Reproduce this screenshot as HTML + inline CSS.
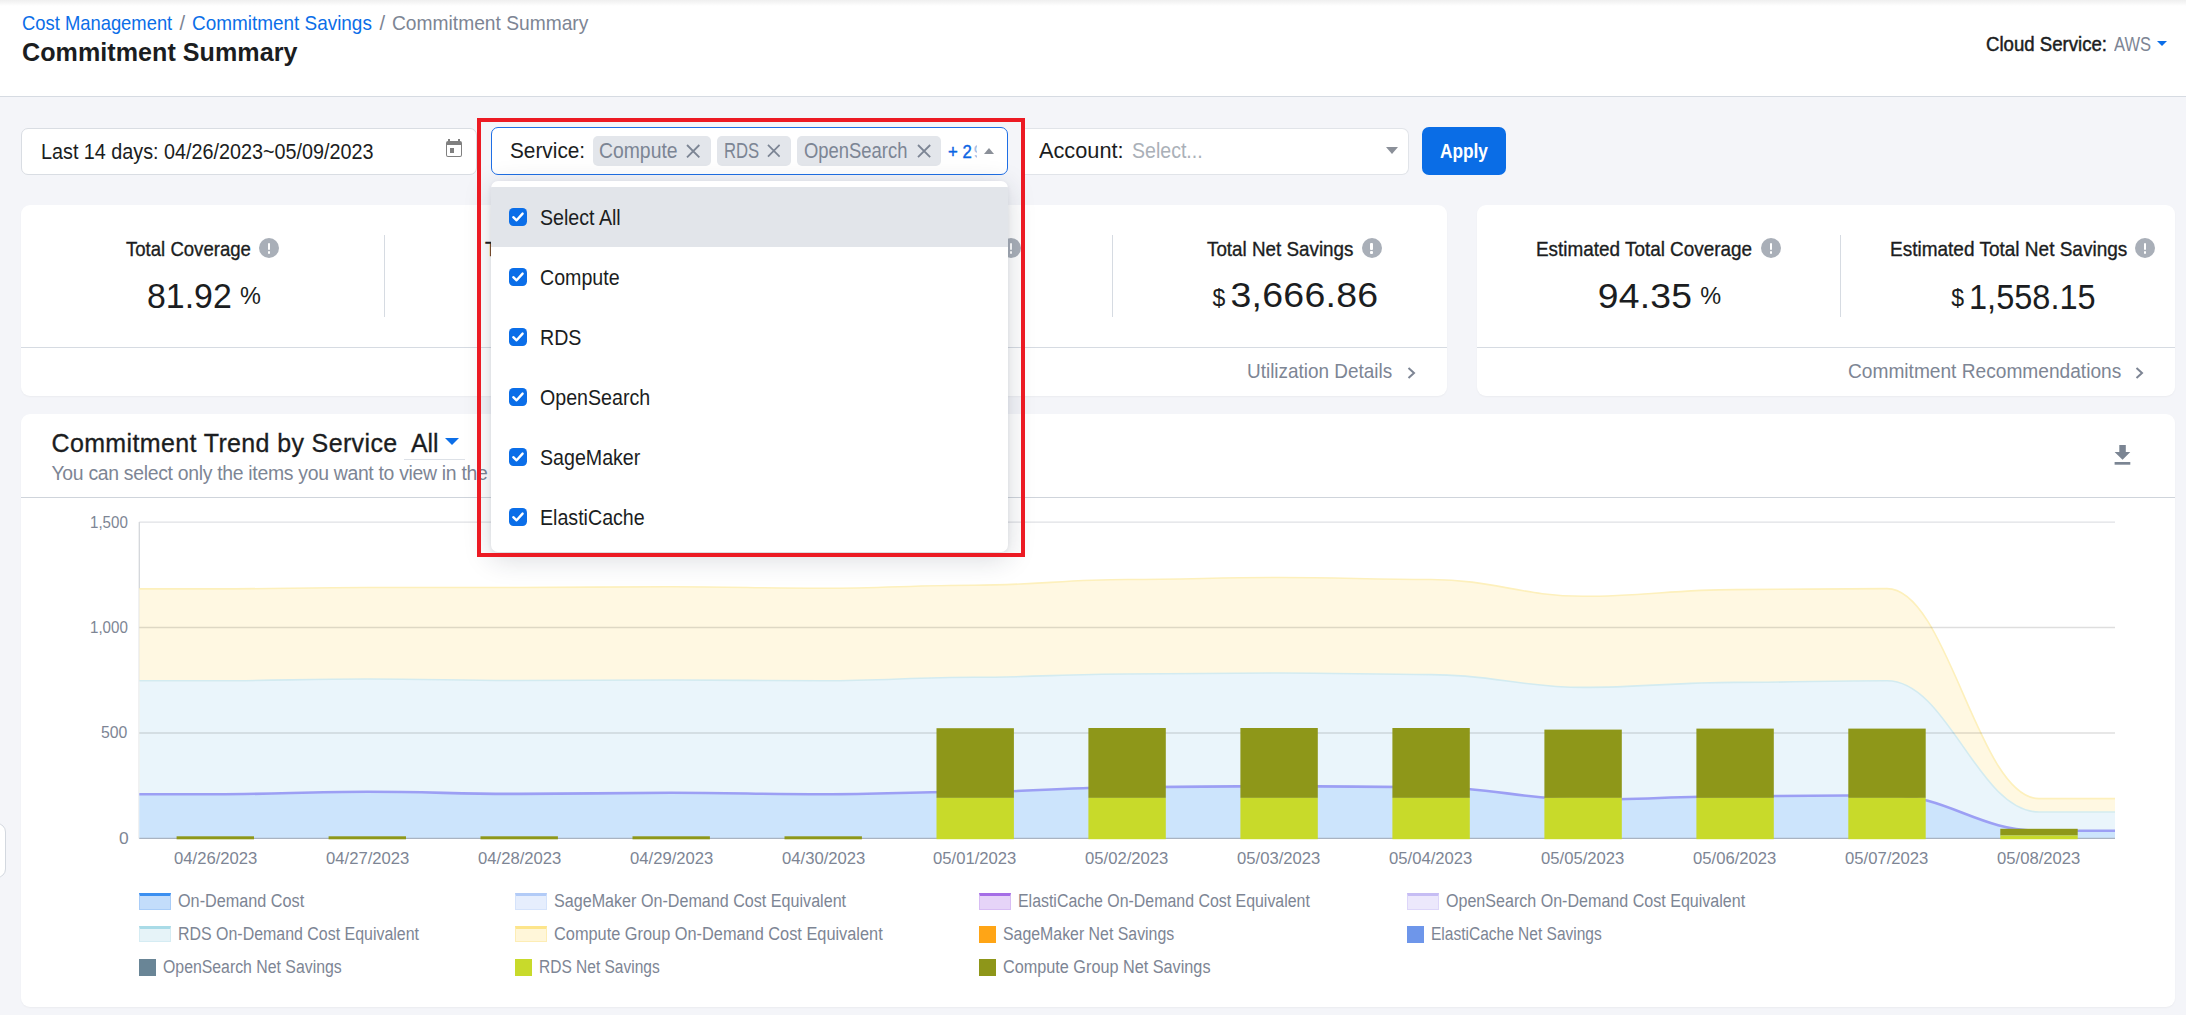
<!DOCTYPE html>
<html><head><meta charset="utf-8"><style>
html,body{margin:0;padding:0;}
body{width:2186px;height:1015px;overflow:hidden;position:relative;background:#f4f5f9;font-family:"Liberation Sans",sans-serif;}
.t{position:absolute;white-space:nowrap;line-height:1;}
</style></head><body>
<div style="position:absolute;left:0;top:0;width:2186px;height:96px;background:#fff;border-bottom:1.5px solid #d6dbe2;"></div>
<div style="position:absolute;left:0;top:0;width:2186px;height:6px;background:linear-gradient(#efefef,#fff);"></div>
<div class="t" style="left:22.00px;top:13.13px;font-size:20.20px;color:#0b6ee8;transform:scale(0.9107,1.0000);transform-origin:0 16.97px;">Cost Management</div>
<div class="t" style="left:179.50px;top:13.13px;font-size:20.20px;color:#7d8594;">/</div>
<div class="t" style="left:192.00px;top:13.13px;font-size:20.20px;color:#0b6ee8;transform:scale(0.9375,1.0000);transform-origin:0 16.97px;">Commitment Savings</div>
<div class="t" style="left:379.50px;top:13.13px;font-size:20.20px;color:#7d8594;">/</div>
<div class="t" style="left:392.00px;top:13.13px;font-size:20.20px;color:#7d8594;transform:scale(0.9514,1.0000);transform-origin:0 16.97px;">Commitment Summary</div>
<div class="t" style="left:22.00px;top:39.92px;font-size:25.10px;letter-spacing:0.046px;font-weight:700;color:#1b1d21;">Commitment Summary</div>
<div class="t" style="left:1985.80px;top:34.74px;font-size:19.60px;color:#1b1d21;transform:scale(0.9498,1.0000);transform-origin:0 16.46px;-webkit-text-stroke:0.45px #1b1d21;">Cloud Service:</div>
<div class="t" style="left:2113.80px;top:34.74px;font-size:19.60px;color:#7d8594;transform:scale(0.8427,1.0000);transform-origin:0 16.46px;">AWS</div>
<div style="position:absolute;left:2157.3px;top:41px;width:0;height:0;border-left:5.75px solid transparent;border-right:5.75px solid transparent;border-top:5.5px solid #0b6ee8;"></div>
<div style="position:absolute;left:21px;top:127.5px;width:454px;height:45px;background:#fff;border:1px solid #d9dde3;border-radius:7px;"></div>
<div class="t" style="left:41.00px;top:140.70px;font-size:21.90px;color:#1b1d21;transform:scale(0.9032,1.0000);transform-origin:0 18.40px;">Last 14 days: 04/26/2023~05/09/2023</div>
<div style="position:absolute;left:445.9px;top:141.1px;width:14.4px;height:11.4px;border:1.4px solid #808080;border-top:4.7px solid #808080;border-radius:2px;"></div>
<div style="position:absolute;left:449.9px;top:148px;width:4.3px;height:4.7px;background:#808080;"></div>
<div style="position:absolute;left:448.4px;top:139px;width:1.7px;height:3px;background:#808080;"></div>
<div style="position:absolute;left:458.3px;top:139px;width:1.7px;height:3px;background:#808080;"></div>
<div style="position:absolute;left:491px;top:127px;width:514.5px;height:45.5px;background:#fff;border:1.5px solid #1f6fe5;border-radius:7px;"></div>
<div class="t" style="left:510.40px;top:139.72px;font-size:22.60px;color:#1b1d21;transform:scale(0.9205,1.0000);transform-origin:0 18.98px;">Service:</div>
<div style="position:absolute;left:593px;top:136px;width:117.8px;height:29.6px;background:#e3e6eb;border-radius:5px;"></div>
<div class="t" style="left:599.20px;top:141.14px;font-size:21.50px;color:#7c8594;transform:scale(0.9004,1.0000);transform-origin:0 18.06px;">Compute</div>
<svg style="position:absolute;left:685.6px;top:143.8px" width="14.4" height="14.4" viewBox="0 0 14 14"><path d="M1 1L13 13M13 1L1 13" stroke="#7c8594" stroke-width="1.8" fill="none"/></svg>
<div style="position:absolute;left:717.2px;top:136px;width:73.6px;height:29.6px;background:#e3e6eb;border-radius:5px;"></div>
<div class="t" style="left:724.30px;top:141.14px;font-size:21.50px;color:#7c8594;transform:scale(0.7759,1.0000);transform-origin:0 18.06px;">RDS</div>
<svg style="position:absolute;left:766.6px;top:144.2px" width="13.6" height="13.6" viewBox="0 0 14 14"><path d="M1 1L13 13M13 1L1 13" stroke="#7c8594" stroke-width="1.8" fill="none"/></svg>
<div style="position:absolute;left:797.3px;top:136px;width:143.4px;height:29.6px;background:#e3e6eb;border-radius:5px;"></div>
<div class="t" style="left:804.40px;top:141.14px;font-size:21.50px;color:#7c8594;transform:scale(0.8565,1.0000);transform-origin:0 18.06px;">OpenSearch</div>
<svg style="position:absolute;left:916.5px;top:143.9px" width="14.2" height="14.2" viewBox="0 0 14 14"><path d="M1 1L13 13M13 1L1 13" stroke="#7c8594" stroke-width="1.8" fill="none"/></svg>
<div style="position:absolute;left:947px;top:134px;width:29.5px;height:34px;overflow:hidden;"><div class="t" style="margin-left:-947px;margin-top:-134px;left:948.20px;top:142.91px;font-size:18.80px;color:#0b66e4;transform:scale(0.8915,1.0000);transform-origin:0 15.79px;-webkit-text-stroke:0.45px #0b66e4;">+ 2</div><div class="t" style="margin-left:-947px;margin-top:-134px;left:973.50px;top:142.91px;font-size:18.80px;color:#a9c1e6;">9</div></div>
<div style="position:absolute;left:984.2px;top:147.9px;width:0;height:0;border-left:5.8px solid transparent;border-right:5.8px solid transparent;border-bottom:6.2px solid #8b9099;"></div>
<div style="position:absolute;left:1021px;top:127.5px;width:387px;height:45px;background:#fff;border:1px solid #e1e4e9;border-left:none;border-radius:0 7px 7px 0;"></div>
<div class="t" style="left:1039.40px;top:140.32px;font-size:22.60px;color:#1b1d21;transform:scale(0.9623,1.0000);transform-origin:0 18.98px;">Account:</div>
<div class="t" style="left:1131.60px;top:140.32px;font-size:22.60px;color:#aab0b8;transform:scale(0.8654,1.0000);transform-origin:0 18.98px;">Select...</div>
<div style="position:absolute;left:1386px;top:147.4px;width:0;height:0;border-left:6px solid transparent;border-right:6px solid transparent;border-top:7.4px solid #8b9099;"></div>
<div style="position:absolute;left:1422px;top:127px;width:84px;height:48px;background:#0a6de6;border-radius:7px;"></div>
<div class="t" style="left:1440.40px;top:140.68px;font-size:20.50px;font-weight:700;color:#fff;transform:scale(0.8423,1.0000);transform-origin:0 17.22px;">Apply</div>
<div style="position:absolute;left:21px;top:205px;width:1426px;height:190.5px;background:#fff;border-radius:9px;box-shadow:0 1px 2px rgba(0,0,0,0.04);"></div>
<div style="position:absolute;left:1477px;top:205px;width:698px;height:190.5px;background:#fff;border-radius:9px;box-shadow:0 1px 2px rgba(0,0,0,0.04);"></div>
<div style="position:absolute;left:21px;top:346.5px;width:1426px;height:1.5px;background:#d6dbe2;"></div>
<div style="position:absolute;left:1477px;top:346.5px;width:698px;height:1.5px;background:#d6dbe2;"></div>
<div style="position:absolute;left:383.55px;top:235.2px;width:1.5px;height:81.5px;background:#d6dbe2;"></div>
<div style="position:absolute;left:1111.75px;top:235.2px;width:1.5px;height:81.5px;background:#d6dbe2;"></div>
<div style="position:absolute;left:1839.85px;top:235.2px;width:1.5px;height:81.5px;background:#d6dbe2;"></div>
<div class="t" style="left:125.70px;top:238.90px;font-size:20.60px;color:#1b1d21;transform:scale(0.9016,1.0000);transform-origin:0 17.30px;-webkit-text-stroke:0.35px #1b1d21;">Total Coverage</div>
<div style="position:absolute;left:259.2px;top:238.0px;width:20px;height:20px;border-radius:50%;background:#a9afb8;"><div style="position:absolute;left:8.8px;top:4.6px;width:2.4px;height:7.4px;background:#fff;border-radius:1px"></div><div style="position:absolute;left:8.8px;top:13.4px;width:2.4px;height:2.4px;background:#fff;border-radius:1px"></div></div>
<div class="t" style="left:146.50px;top:278.92px;font-size:34.50px;color:#1b1d21;transform:scale(0.9824,1.0000);transform-origin:0 28.98px;">81.92</div>
<div class="t" style="left:240.00px;top:284.86px;font-size:23.50px;color:#1b1d21;">%</div>
<div class="t" style="left:485.10px;top:238.50px;font-size:20.60px;color:#1b1d21;-webkit-text-stroke:0.35px #1b1d21;">Total Utilization</div>
<div style="position:absolute;left:1001.0px;top:238.0px;width:20px;height:20px;border-radius:50%;background:#a9afb8;"><div style="position:absolute;left:8.8px;top:4.6px;width:2.4px;height:7.4px;background:#fff;border-radius:1px"></div><div style="position:absolute;left:8.8px;top:13.4px;width:2.4px;height:2.4px;background:#fff;border-radius:1px"></div></div>
<div class="t" style="left:1206.90px;top:238.95px;font-size:20.30px;color:#1b1d21;transform:scale(0.9276,1.0000);transform-origin:0 17.05px;-webkit-text-stroke:0.35px #1b1d21;">Total Net Savings</div>
<div style="position:absolute;left:1361.6px;top:238.0px;width:20px;height:20px;border-radius:50%;background:#a9afb8;"><div style="position:absolute;left:8.8px;top:4.6px;width:2.4px;height:7.4px;background:#fff;border-radius:1px"></div><div style="position:absolute;left:8.8px;top:13.4px;width:2.4px;height:2.4px;background:#fff;border-radius:1px"></div></div>
<div class="t" style="left:1212.40px;top:286.68px;font-size:23.00px;color:#1b1d21;">$</div>
<div class="t" style="left:1230.50px;top:276.30px;font-size:37.50px;letter-spacing:0.248px;color:#1b1d21;transform:scale(1.0000,0.9350);transform-origin:0 31.50px;">3,666.86</div>
<div class="t" style="left:1246.60px;top:361.77px;font-size:19.80px;color:#7d8594;transform:scale(0.9574,1.0000);transform-origin:0 16.63px;">Utilization Details</div>
<svg style="position:absolute;left:1407.0px;top:366.5px" width="9" height="12" viewBox="0 0 9 12"><path d="M1.5 1L7 6L1.5 11" stroke="#7d8594" stroke-width="2" fill="none"/></svg>
<div class="t" style="left:1536.40px;top:239.00px;font-size:20.60px;color:#1b1d21;transform:scale(0.9178,1.0000);transform-origin:0 17.30px;-webkit-text-stroke:0.35px #1b1d21;">Estimated Total Coverage</div>
<div style="position:absolute;left:1760.8px;top:238.0px;width:20px;height:20px;border-radius:50%;background:#a9afb8;"><div style="position:absolute;left:8.8px;top:4.6px;width:2.4px;height:7.4px;background:#fff;border-radius:1px"></div><div style="position:absolute;left:8.8px;top:13.4px;width:2.4px;height:2.4px;background:#fff;border-radius:1px"></div></div>
<div class="t" style="left:1597.80px;top:276.77px;font-size:37.30px;letter-spacing:0.216px;color:#1b1d21;transform:scale(1.0000,0.9350);transform-origin:0 31.33px;">94.35</div>
<div class="t" style="left:1700.30px;top:284.86px;font-size:23.50px;color:#1b1d21;">%</div>
<div class="t" style="left:1889.50px;top:239.00px;font-size:20.60px;color:#1b1d21;transform:scale(0.9227,1.0000);transform-origin:0 17.30px;-webkit-text-stroke:0.35px #1b1d21;">Estimated Total Net Savings</div>
<div style="position:absolute;left:2135.2px;top:238.0px;width:20px;height:20px;border-radius:50%;background:#a9afb8;"><div style="position:absolute;left:8.8px;top:4.6px;width:2.4px;height:7.4px;background:#fff;border-radius:1px"></div><div style="position:absolute;left:8.8px;top:13.4px;width:2.4px;height:2.4px;background:#fff;border-radius:1px"></div></div>
<div class="t" style="left:1951.20px;top:286.68px;font-size:23.00px;color:#1b1d21;">$</div>
<div class="t" style="left:1968.80px;top:278.70px;font-size:35.00px;color:#1b1d21;transform:scale(0.9294,1.0000);transform-origin:0 29.40px;">1,558.15</div>
<div class="t" style="left:1847.60px;top:361.94px;font-size:19.60px;color:#7d8594;transform:scale(0.9765,1.0000);transform-origin:0 16.46px;">Commitment Recommendations</div>
<svg style="position:absolute;left:2135.0px;top:366.5px" width="9" height="12" viewBox="0 0 9 12"><path d="M1.5 1L7 6L1.5 11" stroke="#7d8594" stroke-width="2" fill="none"/></svg>
<div style="position:absolute;left:21px;top:414px;width:2154px;height:593px;background:#fff;border-radius:9px;box-shadow:0 1px 2px rgba(0,0,0,0.04);"></div>
<div style="position:absolute;left:21px;top:497px;width:2154px;height:1px;background:#cfd4db;"></div>
<div class="t" style="left:51.50px;top:430.80px;font-size:25.00px;letter-spacing:0.363px;color:#1b1d21;-webkit-text-stroke:0.3px #1b1d21;">Commitment Trend by Service</div>
<div class="t" style="left:410.60px;top:430.80px;font-size:25.00px;color:#1b1d21;transform:scale(0.9910,1.0000);transform-origin:0 21.00px;-webkit-text-stroke:0.3px #1b1d21;">All</div>
<div style="position:absolute;left:445px;top:438.3px;width:0;height:0;border-left:7px solid transparent;border-right:7px solid transparent;border-top:7.9px solid #0b6ee8;"></div>
<div style="position:absolute;left:404px;top:459px;width:60.7px;height:1px;background:#dde1e7;"></div>
<div class="t" style="left:51.50px;top:464.30px;font-size:19.40px;color:#7d8594;letter-spacing:-0.302px;">You can select only the items you want to view in the chart.</div>
<svg style="position:absolute;left:2114px;top:444px" width="17" height="21" viewBox="0 0 17 21"><path d="M5.3 1H11.8V8.1H16.3L8.55 15.8L0.6 8.1H5.3Z" fill="#7b8593"/><rect x="0.6" y="18" width="15.7" height="2.7" fill="#7b8593"/></svg>
<div style="position:absolute;left:-30px;top:823px;width:34px;height:53px;background:#fff;border:1px solid #d3d8df;border-radius:9px;"></div>
<svg style="position:absolute;left:0;top:0" width="2186" height="1015">
<line x1="139.3" y1="522.2" x2="2115" y2="522.2" stroke="#dfe1e5" stroke-width="1.3"/>
<line x1="139.3" y1="522" x2="139.3" y2="838.4" stroke="#d3d6db" stroke-width="1.3"/>
<path d="M139.3,588.9 C169.7,588.9 184.9,588.9 215.3,588.9 C276.1,588.9 306.5,587.5 367.3,587.5 C428.1,587.5 458.5,587.5 519.2,587.5 C580.0,587.5 610.4,586.8 671.2,586.8 C732.0,586.8 762.4,588.2 823.2,588.2 C884.0,588.2 914.4,585.2 975.2,585.2 C1036.0,585.2 1066.4,579.5 1127.1,579.5 C1187.9,579.5 1218.3,577.5 1279.1,577.5 C1339.9,577.5 1370.3,579.5 1431.1,579.5 C1491.9,579.5 1522.3,596.3 1583.1,596.3 C1643.9,596.3 1674.3,589.6 1735.1,589.6 C1795.8,589.6 1826.2,588.6 1887.0,588.6 C1947.8,588.6 1978.2,798.6 2039.0,798.6 C2069.4,798.6 2084.6,798.6 2115.0,798.6 L2115,838.4 L139.3,838.4 Z" fill="#fff8e2"/>
<path d="M139.3,588.9 C169.7,588.9 184.9,588.9 215.3,588.9 C276.1,588.9 306.5,587.5 367.3,587.5 C428.1,587.5 458.5,587.5 519.2,587.5 C580.0,587.5 610.4,586.8 671.2,586.8 C732.0,586.8 762.4,588.2 823.2,588.2 C884.0,588.2 914.4,585.2 975.2,585.2 C1036.0,585.2 1066.4,579.5 1127.1,579.5 C1187.9,579.5 1218.3,577.5 1279.1,577.5 C1339.9,577.5 1370.3,579.5 1431.1,579.5 C1491.9,579.5 1522.3,596.3 1583.1,596.3 C1643.9,596.3 1674.3,589.6 1735.1,589.6 C1795.8,589.6 1826.2,588.6 1887.0,588.6 C1947.8,588.6 1978.2,798.6 2039.0,798.6 C2069.4,798.6 2084.6,798.6 2115.0,798.6" stroke="#fdf0bc" stroke-width="1.6" fill="none"/>
<path d="M139.3,680.8 C169.7,680.8 184.9,680.8 215.3,680.8 C276.1,680.8 306.5,679.0 367.3,679.0 C428.1,679.0 458.5,680.5 519.2,680.5 C580.0,680.5 610.4,680.0 671.2,680.0 C732.0,680.0 762.4,680.8 823.2,680.8 C884.0,680.8 914.4,677.3 975.2,677.3 C1036.0,677.3 1066.4,674.0 1127.1,674.0 C1187.9,674.0 1218.3,673.0 1279.1,673.0 C1339.9,673.0 1370.3,674.6 1431.1,674.6 C1491.9,674.6 1522.3,687.4 1583.1,687.4 C1643.9,687.4 1674.3,682.4 1735.1,682.4 C1795.8,682.4 1826.2,680.7 1887.0,680.7 C1947.8,680.7 1978.2,812.0 2039.0,812.0 C2069.4,812.0 2084.6,812.0 2115.0,812.0 L2115,838.4 L139.3,838.4 Z" fill="#eaf5fb"/>
<path d="M139.3,680.8 C169.7,680.8 184.9,680.8 215.3,680.8 C276.1,680.8 306.5,679.0 367.3,679.0 C428.1,679.0 458.5,680.5 519.2,680.5 C580.0,680.5 610.4,680.0 671.2,680.0 C732.0,680.0 762.4,680.8 823.2,680.8 C884.0,680.8 914.4,677.3 975.2,677.3 C1036.0,677.3 1066.4,674.0 1127.1,674.0 C1187.9,674.0 1218.3,673.0 1279.1,673.0 C1339.9,673.0 1370.3,674.6 1431.1,674.6 C1491.9,674.6 1522.3,687.4 1583.1,687.4 C1643.9,687.4 1674.3,682.4 1735.1,682.4 C1795.8,682.4 1826.2,680.7 1887.0,680.7 C1947.8,680.7 1978.2,812.0 2039.0,812.0 C2069.4,812.0 2084.6,812.0 2115.0,812.0" stroke="#d3ebf0" stroke-width="1.6" fill="none"/>
<path d="M139.3,794.2 C169.7,794.2 184.9,794.2 215.3,794.2 C276.1,794.2 306.5,791.8 367.3,791.8 C428.1,791.8 458.5,793.9 519.2,793.9 C580.0,793.9 610.4,792.8 671.2,792.8 C732.0,792.8 762.4,794.2 823.2,794.2 C884.0,794.2 914.4,791.8 975.2,791.8 C1036.0,791.8 1066.4,787.2 1127.1,787.2 C1187.9,787.2 1218.3,786.1 1279.1,786.1 C1339.9,786.1 1370.3,787.2 1431.1,787.2 C1491.9,787.2 1522.3,799.6 1583.1,799.6 C1643.9,799.6 1674.3,796.3 1735.1,796.3 C1795.8,796.3 1826.2,795.3 1887.0,795.3 C1947.8,795.3 1978.2,830.8 2039.0,830.8 C2069.4,830.8 2084.6,830.8 2115.0,830.8 L2115,838.4 L139.3,838.4 Z" fill="#cce4fc"/>
<path d="M139.3,794.2 C169.7,794.2 184.9,794.2 215.3,794.2 C276.1,794.2 306.5,791.8 367.3,791.8 C428.1,791.8 458.5,793.9 519.2,793.9 C580.0,793.9 610.4,792.8 671.2,792.8 C732.0,792.8 762.4,794.2 823.2,794.2 C884.0,794.2 914.4,791.8 975.2,791.8 C1036.0,791.8 1066.4,787.2 1127.1,787.2 C1187.9,787.2 1218.3,786.1 1279.1,786.1 C1339.9,786.1 1370.3,787.2 1431.1,787.2 C1491.9,787.2 1522.3,799.6 1583.1,799.6 C1643.9,799.6 1674.3,796.3 1735.1,796.3 C1795.8,796.3 1826.2,795.3 1887.0,795.3 C1947.8,795.3 1978.2,830.8 2039.0,830.8 C2069.4,830.8 2084.6,830.8 2115.0,830.8" stroke="#9c9ff4" stroke-width="2.6" fill="none"/>
<line x1="139.3" y1="627.5" x2="2115" y2="627.5" stroke="#000" stroke-opacity="0.13" stroke-width="1.3"/>
<line x1="139.3" y1="733.0" x2="2115" y2="733.0" stroke="#000" stroke-opacity="0.13" stroke-width="1.3"/>
<line x1="139.3" y1="838.4" x2="2115" y2="838.4" stroke="#a9b3c1" stroke-width="1.3"/>
<rect x="176.6" y="836.3" width="77.4" height="3" fill="#8e9719"/>
<rect x="328.6" y="836.3" width="77.4" height="3" fill="#8e9719"/>
<rect x="480.5" y="836.3" width="77.4" height="3" fill="#8e9719"/>
<rect x="632.5" y="836.3" width="77.4" height="3" fill="#8e9719"/>
<rect x="784.5" y="836.3" width="77.4" height="3" fill="#8e9719"/>
<rect x="936.5" y="728.2" width="77.4" height="69.7" fill="#8e9719"/>
<rect x="936.5" y="797.9" width="77.4" height="41.3" fill="#c8da2a"/>
<rect x="1088.4" y="728" width="77.4" height="69.9" fill="#8e9719"/>
<rect x="1088.4" y="797.9" width="77.4" height="41.3" fill="#c8da2a"/>
<rect x="1240.4" y="728" width="77.4" height="69.9" fill="#8e9719"/>
<rect x="1240.4" y="797.9" width="77.4" height="41.3" fill="#c8da2a"/>
<rect x="1392.4" y="728" width="77.4" height="69.9" fill="#8e9719"/>
<rect x="1392.4" y="797.9" width="77.4" height="41.3" fill="#c8da2a"/>
<rect x="1544.4" y="729.6" width="77.4" height="68.3" fill="#8e9719"/>
<rect x="1544.4" y="797.9" width="77.4" height="41.3" fill="#c8da2a"/>
<rect x="1696.4" y="728.6" width="77.4" height="69.3" fill="#8e9719"/>
<rect x="1696.4" y="797.9" width="77.4" height="41.3" fill="#c8da2a"/>
<rect x="1848.3" y="728.6" width="77.4" height="69.3" fill="#8e9719"/>
<rect x="1848.3" y="797.9" width="77.4" height="41.3" fill="#c8da2a"/>
<rect x="2000.3" y="828.8" width="77.4" height="6.7" fill="#8e9719"/>
<rect x="2000.3" y="835.5" width="77.4" height="3.7" fill="#c8da2a"/>
</svg>
<div class="t" style="left:89.70px;top:513.58px;font-size:17.40px;color:#7d8594;transform:scale(0.8695,1.0000);transform-origin:0 14.62px;">1,500</div>
<div class="t" style="left:89.70px;top:618.78px;font-size:17.40px;color:#7d8594;transform:scale(0.8695,1.0000);transform-origin:0 14.62px;">1,000</div>
<div class="t" style="left:101.20px;top:724.38px;font-size:17.40px;color:#7d8594;transform:scale(0.9085,1.0000);transform-origin:0 14.62px;">500</div>
<div class="t" style="left:118.90px;top:829.58px;font-size:17.40px;color:#7d8594;">0</div>
<div class="t" style="left:173.59px;top:850.38px;font-size:17.40px;color:#7d8594;transform:scale(0.9577,1.0000);transform-origin:0 14.62px;">04/26/2023</div>
<div class="t" style="left:325.57px;top:850.38px;font-size:17.40px;color:#7d8594;transform:scale(0.9577,1.0000);transform-origin:0 14.62px;">04/27/2023</div>
<div class="t" style="left:477.54px;top:850.38px;font-size:17.40px;color:#7d8594;transform:scale(0.9577,1.0000);transform-origin:0 14.62px;">04/28/2023</div>
<div class="t" style="left:629.52px;top:850.38px;font-size:17.40px;color:#7d8594;transform:scale(0.9577,1.0000);transform-origin:0 14.62px;">04/29/2023</div>
<div class="t" style="left:781.50px;top:850.38px;font-size:17.40px;color:#7d8594;transform:scale(0.9577,1.0000);transform-origin:0 14.62px;">04/30/2023</div>
<div class="t" style="left:933.47px;top:850.38px;font-size:17.40px;color:#7d8594;transform:scale(0.9577,1.0000);transform-origin:0 14.62px;">05/01/2023</div>
<div class="t" style="left:1085.45px;top:850.38px;font-size:17.40px;color:#7d8594;transform:scale(0.9577,1.0000);transform-origin:0 14.62px;">05/02/2023</div>
<div class="t" style="left:1237.43px;top:850.38px;font-size:17.40px;color:#7d8594;transform:scale(0.9577,1.0000);transform-origin:0 14.62px;">05/03/2023</div>
<div class="t" style="left:1389.40px;top:850.38px;font-size:17.40px;color:#7d8594;transform:scale(0.9577,1.0000);transform-origin:0 14.62px;">05/04/2023</div>
<div class="t" style="left:1541.38px;top:850.38px;font-size:17.40px;color:#7d8594;transform:scale(0.9577,1.0000);transform-origin:0 14.62px;">05/05/2023</div>
<div class="t" style="left:1693.36px;top:850.38px;font-size:17.40px;color:#7d8594;transform:scale(0.9577,1.0000);transform-origin:0 14.62px;">05/06/2023</div>
<div class="t" style="left:1845.33px;top:850.38px;font-size:17.40px;color:#7d8594;transform:scale(0.9577,1.0000);transform-origin:0 14.62px;">05/07/2023</div>
<div class="t" style="left:1997.31px;top:850.38px;font-size:17.40px;color:#7d8594;transform:scale(0.9577,1.0000);transform-origin:0 14.62px;">05/08/2023</div>
<div style="position:absolute;left:139px;top:893.4px;width:30px;height:12.2px;background:#c3ddfb;border:1px solid #a9cdf8;border-top:3px solid #3b8ff0;"></div>
<div class="t" style="left:177.60px;top:893.12px;font-size:17.60px;color:#7d8594;transform:scale(0.9217,1.0000);transform-origin:0 14.78px;">On-Demand Cost</div>
<div style="position:absolute;left:515px;top:893.4px;width:30px;height:12.2px;background:#e6eefd;border:1px solid #d5e3fb;border-top:3px solid #b2cbf7;"></div>
<div class="t" style="left:553.60px;top:893.12px;font-size:17.60px;color:#7d8594;transform:scale(0.9162,1.0000);transform-origin:0 14.78px;">SageMaker On-Demand Cost Equivalent</div>
<div style="position:absolute;left:979px;top:893.4px;width:30px;height:12.2px;background:#e6d4f8;border:1px solid #d8bdf4;border-top:3px solid #a56ee6;"></div>
<div class="t" style="left:1017.60px;top:893.12px;font-size:17.60px;color:#7d8594;transform:scale(0.9044,1.0000);transform-origin:0 14.78px;">ElastiCache On-Demand Cost Equivalent</div>
<div style="position:absolute;left:1407px;top:893.4px;width:30px;height:12.2px;background:#ece8fc;border:1px solid #ddd6f9;border-top:3px solid #c6bdf4;"></div>
<div class="t" style="left:1445.60px;top:893.12px;font-size:17.60px;color:#7d8594;transform:scale(0.9133,1.0000);transform-origin:0 14.78px;">OpenSearch On-Demand Cost Equivalent</div>
<div style="position:absolute;left:139px;top:926.2px;width:30px;height:12.2px;background:#e6f3f8;border:1px solid #d5ecf3;border-top:3px solid #a9dbe7;"></div>
<div class="t" style="left:177.60px;top:925.92px;font-size:17.60px;color:#7d8594;transform:scale(0.9060,1.0000);transform-origin:0 14.78px;">RDS On-Demand Cost Equivalent</div>
<div style="position:absolute;left:515px;top:926.2px;width:30px;height:12.2px;background:#fff6d9;border:1px solid #fdedb5;border-top:3px solid #fde58b;"></div>
<div class="t" style="left:553.60px;top:925.92px;font-size:17.60px;color:#7d8594;transform:scale(0.9285,1.0000);transform-origin:0 14.78px;">Compute Group On-Demand Cost Equivalent</div>
<div style="position:absolute;left:979px;top:925.9px;width:16.8px;height:16.8px;background:#ffa516;"></div>
<div class="t" style="left:1002.50px;top:925.92px;font-size:17.60px;color:#7d8594;transform:scale(0.9025,1.0000);transform-origin:0 14.78px;">SageMaker Net Savings</div>
<div style="position:absolute;left:1407px;top:925.9px;width:16.8px;height:16.8px;background:#6e96ea;"></div>
<div class="t" style="left:1430.50px;top:925.92px;font-size:17.60px;color:#7d8594;transform:scale(0.8818,1.0000);transform-origin:0 14.78px;">ElastiCache Net Savings</div>
<div style="position:absolute;left:139px;top:959.0px;width:16.8px;height:16.8px;background:#698596;"></div>
<div class="t" style="left:162.50px;top:959.02px;font-size:17.60px;color:#7d8594;transform:scale(0.9002,1.0000);transform-origin:0 14.78px;">OpenSearch Net Savings</div>
<div style="position:absolute;left:515px;top:959.0px;width:16.8px;height:16.8px;background:#c8da2b;"></div>
<div class="t" style="left:538.50px;top:959.02px;font-size:17.60px;color:#7d8594;transform:scale(0.8815,1.0000);transform-origin:0 14.78px;">RDS Net Savings</div>
<div style="position:absolute;left:979px;top:959.0px;width:16.8px;height:16.8px;background:#8e9619;"></div>
<div class="t" style="left:1002.50px;top:959.02px;font-size:17.60px;color:#7d8594;transform:scale(0.9226,1.0000);transform-origin:0 14.78px;">Compute Group Net Savings</div>
<div style="position:absolute;left:491px;top:181.3px;width:517px;height:371px;background:#fff;border-radius:7px;box-shadow:0 6px 28px rgba(30,40,60,0.18),0 1px 4px rgba(30,40,60,0.08);z-index:20;overflow:hidden">
<div style="position:absolute;left:0;top:5.7px;width:517px;height:60px;background:#e2e5ea"></div></div>
<div style="position:absolute;left:509px;top:208.0px;width:18px;height:18px;background:#0b6ee8;border-radius:4.5px;z-index:21"><svg width="18" height="18" viewBox="0 0 18 18" style="position:absolute;left:0;top:0"><path d="M4.3 9.2L7.6 12.3L13.6 5.6" stroke="#fff" stroke-width="2.4" fill="none" stroke-linecap="round" stroke-linejoin="round"/></svg></div>
<div class="t" style="left:539.60px;top:206.69px;font-size:21.80px;color:#1b1d21;z-index:21;transform:scale(0.9000,1.0000);transform-origin:0 18.31px;">Select All</div>
<div style="position:absolute;left:509px;top:268.0px;width:18px;height:18px;background:#0b6ee8;border-radius:4.5px;z-index:21"><svg width="18" height="18" viewBox="0 0 18 18" style="position:absolute;left:0;top:0"><path d="M4.3 9.2L7.6 12.3L13.6 5.6" stroke="#fff" stroke-width="2.4" fill="none" stroke-linecap="round" stroke-linejoin="round"/></svg></div>
<div class="t" style="left:539.60px;top:266.69px;font-size:21.80px;color:#1b1d21;z-index:21;transform:scale(0.9000,1.0000);transform-origin:0 18.31px;">Compute</div>
<div style="position:absolute;left:509px;top:328.0px;width:18px;height:18px;background:#0b6ee8;border-radius:4.5px;z-index:21"><svg width="18" height="18" viewBox="0 0 18 18" style="position:absolute;left:0;top:0"><path d="M4.3 9.2L7.6 12.3L13.6 5.6" stroke="#fff" stroke-width="2.4" fill="none" stroke-linecap="round" stroke-linejoin="round"/></svg></div>
<div class="t" style="left:539.60px;top:326.69px;font-size:21.80px;color:#1b1d21;z-index:21;transform:scale(0.9000,1.0000);transform-origin:0 18.31px;">RDS</div>
<div style="position:absolute;left:509px;top:388.0px;width:18px;height:18px;background:#0b6ee8;border-radius:4.5px;z-index:21"><svg width="18" height="18" viewBox="0 0 18 18" style="position:absolute;left:0;top:0"><path d="M4.3 9.2L7.6 12.3L13.6 5.6" stroke="#fff" stroke-width="2.4" fill="none" stroke-linecap="round" stroke-linejoin="round"/></svg></div>
<div class="t" style="left:539.60px;top:386.69px;font-size:21.80px;color:#1b1d21;z-index:21;transform:scale(0.9000,1.0000);transform-origin:0 18.31px;">OpenSearch</div>
<div style="position:absolute;left:509px;top:448.0px;width:18px;height:18px;background:#0b6ee8;border-radius:4.5px;z-index:21"><svg width="18" height="18" viewBox="0 0 18 18" style="position:absolute;left:0;top:0"><path d="M4.3 9.2L7.6 12.3L13.6 5.6" stroke="#fff" stroke-width="2.4" fill="none" stroke-linecap="round" stroke-linejoin="round"/></svg></div>
<div class="t" style="left:539.60px;top:446.69px;font-size:21.80px;color:#1b1d21;z-index:21;transform:scale(0.9000,1.0000);transform-origin:0 18.31px;">SageMaker</div>
<div style="position:absolute;left:509px;top:508.0px;width:18px;height:18px;background:#0b6ee8;border-radius:4.5px;z-index:21"><svg width="18" height="18" viewBox="0 0 18 18" style="position:absolute;left:0;top:0"><path d="M4.3 9.2L7.6 12.3L13.6 5.6" stroke="#fff" stroke-width="2.4" fill="none" stroke-linecap="round" stroke-linejoin="round"/></svg></div>
<div class="t" style="left:539.60px;top:506.69px;font-size:21.80px;color:#1b1d21;z-index:21;transform:scale(0.9000,1.0000);transform-origin:0 18.31px;">ElastiCache</div>
<div style="position:absolute;left:477px;top:118px;width:540px;height:431px;border:4px solid #ec1a23;z-index:30;"></div>
</body></html>
